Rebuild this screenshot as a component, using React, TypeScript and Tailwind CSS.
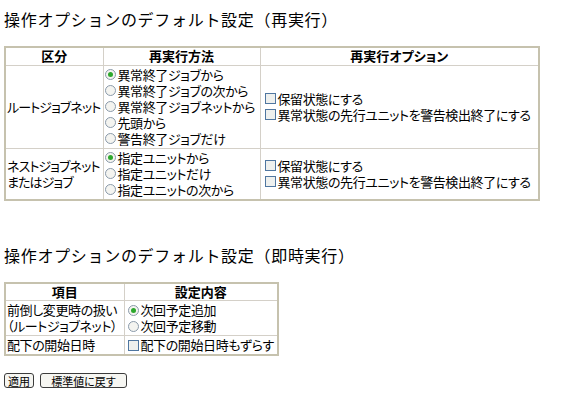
import React from "react"

const font = "font-['Noto_Sans_CJK_JP','Noto_Sans',sans-serif] [font-feature-settings:'palt'] tracking-[-0.4px]"

function Radio({ checked, label }: { checked?: boolean; label: string }) {
  return (
    <div className="flex items-center h-[16px] whitespace-nowrap">
      <span className="mr-[2px] flex h-[11px] w-[11px] shrink-0 items-center justify-center rounded-full border border-[#8a9aaa] bg-[#f4f4f0]">
        {checked && <span className="h-[5px] w-[5px] rounded-full bg-[#2da82d]" />}
      </span>
      {label}
    </div>
  )
}

function Check({ label }: { label: string }) {
  return (
    <div className="flex items-center h-[16px] whitespace-nowrap">
      <span className="mr-[2px] h-[11px] w-[11px] shrink-0 border border-[#4f76a0] bg-[#eef0ee]" />
      {label}
    </div>
  )
}

const th = "border border-[#d4d0c8] font-bold text-center h-[18px] p-0 leading-[16px] tracking-normal"
const td = "border border-[#d4d0c8] px-[1px] py-[1px] align-middle leading-[16px] whitespace-nowrap"
const label = "tracking-[-0.9px]"
const title = "text-[16px] leading-[20px] font-normal [font-feature-settings:normal] tracking-[0.7px]"

export default function App() {
  return (
    <div className={`${font} text-black bg-white w-[572px] h-[404px] px-[4px] pt-[9px] text-[13px]`}>
      <h1 className={title}>操作オプションのデフォルト設定（再実行）</h1>

      <table className="mt-[17px] border-collapse border-2 border-[#c6c2ae] w-[536px] table-fixed">
        <colgroup>
          <col className="w-[98px]" />
          <col className="w-[157px]" />
          <col />
        </colgroup>
        <thead>
          <tr>
            <th className={th}>区分</th>
            <th className={th}>再実行方法</th>
            <th className={th}>再実行オプション</th>
          </tr>
        </thead>
        <tbody>
          <tr>
            <td className={`${td} ${label}`}>ルートジョブネット</td>
            <td className={td}>
              <Radio checked label="異常終了ジョブから" />
              <Radio label="異常終了ジョブの次から" />
              <Radio label="異常終了ジョブネットから" />
              <Radio label="先頭から" />
              <Radio label="警告終了ジョブだけ" />
            </td>
            <td className={`${td} pl-[4px]`}>
              <Check label="保留状態にする" />
              <Check label="異常状態の先行ユニットを警告検出終了にする" />
            </td>
          </tr>
          <tr>
            <td className={`${td} ${label}`}>
              ネストジョブネット
              <br />
              またはジョブ
            </td>
            <td className={td}>
              <Radio checked label="指定ユニットから" />
              <Radio label="指定ユニットだけ" />
              <Radio label="指定ユニットの次から" />
            </td>
            <td className={`${td} pl-[4px]`}>
              <Check label="保留状態にする" />
              <Check label="異常状態の先行ユニットを警告検出終了にする" />
            </td>
          </tr>
        </tbody>
      </table>

      <h1 className={`mt-[44px] ${title}`}>操作オプションのデフォルト設定（即時実行）</h1>

      <table className="mt-[17px] border-collapse border-2 border-[#c6c2ae] w-[275px] table-fixed">
        <colgroup>
          <col className="w-[119px]" />
          <col />
        </colgroup>
        <thead>
          <tr>
            <th className={th}>項目</th>
            <th className={th}>設定内容</th>
          </tr>
        </thead>
        <tbody>
          <tr>
            <td className={td}>
              前倒し変更時の扱い
              <br />
              （ルートジョブネット）
            </td>
            <td className={`${td} pl-[3px]`}>
              <Radio checked label="次回予定追加" />
              <Radio label="次回予定移動" />
            </td>
          </tr>
          <tr>
            <td className={td}>配下の開始日時</td>
            <td className={`${td} pl-[3px]`}>
              <Check label="配下の開始日時もずらす" />
            </td>
          </tr>
        </tbody>
      </table>

      <div className="mt-[17px] flex gap-[6px] tracking-normal">
        <button className="h-[15px] w-[30px] rounded-[3px] border border-[#3c3c3c] bg-[#f6f6f2] text-[11px] leading-[12px]">
          適用
        </button>
        <button className="h-[15px] w-[87px] rounded-[3px] border border-[#3c3c3c] bg-[#f6f6f2] text-[11px] leading-[12px]">
          標準値に戻す
        </button>
      </div>
    </div>
  )
}
